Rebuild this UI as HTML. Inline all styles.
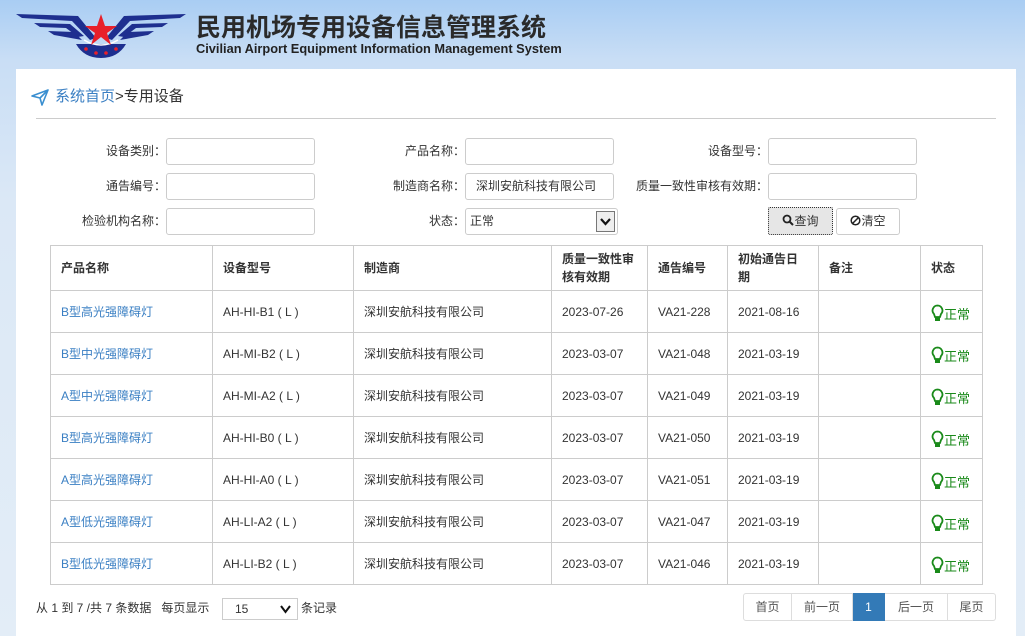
<!DOCTYPE html>
<html><head><meta charset="utf-8"><style>
*{margin:0;padding:0;box-sizing:border-box}
body{width:1025px;height:636px;overflow:hidden;font-family:"Liberation Sans","Noto Sans CJK SC",sans-serif;font-size:12px;color:#333;background:linear-gradient(180deg,#a9cdf3 0%,#c9def5 60px,#dbe8f6 200px,#e3edf7 100%);position:relative}
.a{position:absolute}
.panel{left:16px;top:69px;width:1000px;height:567px;background:#fff}
.lbl{position:absolute;text-align:right;font-size:12px;color:#333;line-height:26px}
.inp{position:absolute;height:27px;width:149px;border:1px solid #ccc;border-radius:3px;background:#fff;font-size:12px;line-height:25px;padding-left:10px}
table{position:absolute;left:50px;top:245px;border-collapse:collapse;font-size:12px}
td,th{border:1px solid #ccc;text-align:left;padding:0 10px;height:42px;vertical-align:middle}
th{font-weight:bold;height:45px;line-height:18px;font-size:12px}
td.n{color:#3a7fc3}
.ok{color:#1a8a1a;font-size:13px;padding-top:4px}
.ok svg{vertical-align:-3px}
.pg{position:absolute;top:593px;height:28px;border:1px solid #ddd;border-left:none;line-height:26px;text-align:center;color:#555;font-size:12px}
</style></head><body>
<svg class="a" style="left:0;top:0" width="200" height="65" viewBox="0 0 200 65">
<g fill="#1e2f8f">
<path d="M16 14 L78 16 L96 38 L90 40 L72 21 L22 18 Z"/>
<path d="M186 14 L124 16 L106 38 L112 40 L130 21 L180 18 Z"/>
<path d="M34 23 L70 24 L84 36 L78 37 L66 28 L40 27 Z"/>
<path d="M168 23 L132 24 L118 36 L124 37 L136 28 L162 27 Z"/>
<path d="M48 31 L74 32 L82 40 L54 35 Z"/>
<path d="M154 31 L128 32 L120 40 L148 35 Z"/>
<path d="M76 44 L126 44 Q118 58 101 58 Q84 58 76 44 Z"/>
</g>
<path d="M84 40 Q101 50 118 40" stroke="#fff" stroke-width="1.5" fill="none"/>
<polygon points="101,14 105,26 117,26 107,33 111,45 101,37 91,45 95,33 85,26 97,26" fill="#e8202a"/>
<g fill="#e8202a"><circle cx="86" cy="49" r="1.8"/><circle cx="96" cy="53" r="1.8"/><circle cx="106" cy="53" r="1.8"/><circle cx="116" cy="49" r="1.8"/></g>
</svg>
<div class="a" style="left:196px;top:12px;font-size:25px;font-weight:bold;color:#2a2a2a;line-height:32px">民用机场专用设备信息管理系统</div>
<div class="a" style="left:196px;top:41px;font-size:12.8px;font-weight:bold;color:#222;line-height:16px">Civilian Airport Equipment Information Management System</div>
<div class="a panel"></div>
<svg class="a" style="left:30px;top:88px" width="20" height="18" viewBox="0 0 20 18"><path d="M2 8 L18 2 L12 17 L10 10 Z M10 10 L18 2" fill="none" stroke="#3a8fd0" stroke-width="1.6" stroke-linejoin="round"/></svg>
<div class="a" style="left:55px;top:87px;font-size:15px;line-height:20px"><span style="color:#3a7fc3">系统首页</span>&gt;专用设备</div>
<div class="a" style="left:36px;top:118px;width:960px;height:1px;background:#ccc"></div>

<div class="lbl" style="left:40px;top:138px;width:126px">设备类别：</div><div class="inp" style="left:166px;top:138px"></div>
<div class="lbl" style="left:340px;top:138px;width:125px">产品名称：</div><div class="inp" style="left:465px;top:138px"></div>
<div class="lbl" style="left:620px;top:138px;width:148px">设备型号：</div><div class="inp" style="left:768px;top:138px"></div>
<div class="lbl" style="left:40px;top:173px;width:126px">通告编号：</div><div class="inp" style="left:166px;top:173px"></div>
<div class="lbl" style="left:340px;top:173px;width:125px">制造商名称：</div><div class="inp" style="left:465px;top:173px">深圳安航科技有限公司</div>
<div class="lbl" style="left:600px;top:173px;width:168px">质量一致性审核有效期：</div><div class="inp" style="left:768px;top:173px"></div>
<div class="lbl" style="left:40px;top:208px;width:126px">检验机构名称：</div><div class="inp" style="left:166px;top:208px"></div>
<div class="lbl" style="left:340px;top:208px;width:125px">状态：</div><div class="inp" style="left:465px;top:208px;width:153px;padding-left:4px">正常<span style="position:absolute;right:2px;top:2px;width:19px;height:21px;border:1px solid #777;background:#eee"><svg width="17" height="19" viewBox="0 0 17 19"><path d="M4 7 L8.5 12 L13 7" stroke="#111" stroke-width="2.2" fill="none"/></svg></span></div>
<div class="a" style="left:768px;top:207px;width:65px;height:28px;border:1px dotted #333;background:#e6e6e6;border-radius:2px;text-align:center;line-height:26px;font-size:12px"><svg width="12" height="12" viewBox="0 0 12 12" style="vertical-align:-1px"><circle cx="5" cy="5" r="3.5" stroke="#222" stroke-width="1.8" fill="none"/><path d="M7.5 7.5 L11 11" stroke="#222" stroke-width="2"/></svg>查询</div>
<div class="a" style="left:836px;top:208px;width:64px;height:27px;border:1px solid #ccc;background:#fff;border-radius:3px;text-align:center;line-height:25px;font-size:12px"><svg width="11" height="11" viewBox="0 0 11 11" style="vertical-align:-1px"><circle cx="5.5" cy="5.5" r="4.3" stroke="#222" stroke-width="1.5" fill="none"/><path d="M2.5 8.5 L8.5 2.5" stroke="#222" stroke-width="1.5"/></svg>清空</div>

<table>
<tr><th style="width:162px">产品名称</th><th style="width:141px">设备型号</th><th style="width:198px">制造商</th><th style="width:96px">质量一致性审<br>核有效期</th><th style="width:80px">通告编号</th><th style="width:91px">初始通告日<br>期</th><th style="width:102px">备注</th><th style="width:62px">状态</th></tr>
<tr><td class="n">B型高光强障碍灯</td><td>AH-HI-B1 ( L )</td><td>深圳安航科技有限公司</td><td>2023-07-26</td><td>VA21-228</td><td>2021-08-16</td><td></td><td class="ok"><svg width="13" height="18" viewBox="0 0 13 18"><path d="M6.5 1.5 A5 5 0 0 1 10 10 L9 13 L4 13 L3 10 A5 5 0 0 1 6.5 1.5 Z" fill="#fff" stroke="#1a8a1a" stroke-width="1.8"/><rect x="4" y="13" width="5" height="4" fill="#1a8a1a"/></svg>正常</td></tr>
<tr><td class="n">B型中光强障碍灯</td><td>AH-MI-B2 ( L )</td><td>深圳安航科技有限公司</td><td>2023-03-07</td><td>VA21-048</td><td>2021-03-19</td><td></td><td class="ok"><svg width="13" height="18" viewBox="0 0 13 18"><path d="M6.5 1.5 A5 5 0 0 1 10 10 L9 13 L4 13 L3 10 A5 5 0 0 1 6.5 1.5 Z" fill="#fff" stroke="#1a8a1a" stroke-width="1.8"/><rect x="4" y="13" width="5" height="4" fill="#1a8a1a"/></svg>正常</td></tr>
<tr><td class="n">A型中光强障碍灯</td><td>AH-MI-A2 ( L )</td><td>深圳安航科技有限公司</td><td>2023-03-07</td><td>VA21-049</td><td>2021-03-19</td><td></td><td class="ok"><svg width="13" height="18" viewBox="0 0 13 18"><path d="M6.5 1.5 A5 5 0 0 1 10 10 L9 13 L4 13 L3 10 A5 5 0 0 1 6.5 1.5 Z" fill="#fff" stroke="#1a8a1a" stroke-width="1.8"/><rect x="4" y="13" width="5" height="4" fill="#1a8a1a"/></svg>正常</td></tr>
<tr><td class="n">B型高光强障碍灯</td><td>AH-HI-B0 ( L )</td><td>深圳安航科技有限公司</td><td>2023-03-07</td><td>VA21-050</td><td>2021-03-19</td><td></td><td class="ok"><svg width="13" height="18" viewBox="0 0 13 18"><path d="M6.5 1.5 A5 5 0 0 1 10 10 L9 13 L4 13 L3 10 A5 5 0 0 1 6.5 1.5 Z" fill="#fff" stroke="#1a8a1a" stroke-width="1.8"/><rect x="4" y="13" width="5" height="4" fill="#1a8a1a"/></svg>正常</td></tr>
<tr><td class="n">A型高光强障碍灯</td><td>AH-HI-A0 ( L )</td><td>深圳安航科技有限公司</td><td>2023-03-07</td><td>VA21-051</td><td>2021-03-19</td><td></td><td class="ok"><svg width="13" height="18" viewBox="0 0 13 18"><path d="M6.5 1.5 A5 5 0 0 1 10 10 L9 13 L4 13 L3 10 A5 5 0 0 1 6.5 1.5 Z" fill="#fff" stroke="#1a8a1a" stroke-width="1.8"/><rect x="4" y="13" width="5" height="4" fill="#1a8a1a"/></svg>正常</td></tr>
<tr><td class="n">A型低光强障碍灯</td><td>AH-LI-A2 ( L )</td><td>深圳安航科技有限公司</td><td>2023-03-07</td><td>VA21-047</td><td>2021-03-19</td><td></td><td class="ok"><svg width="13" height="18" viewBox="0 0 13 18"><path d="M6.5 1.5 A5 5 0 0 1 10 10 L9 13 L4 13 L3 10 A5 5 0 0 1 6.5 1.5 Z" fill="#fff" stroke="#1a8a1a" stroke-width="1.8"/><rect x="4" y="13" width="5" height="4" fill="#1a8a1a"/></svg>正常</td></tr>
<tr><td class="n">B型低光强障碍灯</td><td>AH-LI-B2 ( L )</td><td>深圳安航科技有限公司</td><td>2023-03-07</td><td>VA21-046</td><td>2021-03-19</td><td></td><td class="ok"><svg width="13" height="18" viewBox="0 0 13 18"><path d="M6.5 1.5 A5 5 0 0 1 10 10 L9 13 L4 13 L3 10 A5 5 0 0 1 6.5 1.5 Z" fill="#fff" stroke="#1a8a1a" stroke-width="1.8"/><rect x="4" y="13" width="5" height="4" fill="#1a8a1a"/></svg>正常</td></tr>
</table>

<div class="a" style="left:36px;top:600px;line-height:16px">从 1 到 7 /共 7 条数据&nbsp;&nbsp;&nbsp;每页显示</div>
<div class="a" style="left:222px;top:598px;width:76px;height:22px;border:1px solid #ccc;line-height:20px;padding-left:12px">15<svg style="position:absolute;right:6px;top:6px" width="11" height="9" viewBox="0 0 11 9"><path d="M1 1 L5.5 7 L10 1" stroke="#111" stroke-width="2" fill="none"/></svg></div>
<div class="a" style="left:301px;top:600px;line-height:16px">条记录</div>
<div class="pg" style="left:743px;width:49px;border-left:1px solid #ddd;border-radius:3px 0 0 3px">首页</div>
<div class="pg" style="left:792px;width:61px">前一页</div>
<div class="pg" style="left:853px;width:32px;background:#337ab7;border-color:#337ab7;color:#fff">1</div>
<div class="pg" style="left:885px;width:63px">后一页</div>
<div class="pg" style="left:948px;width:48px;border-radius:0 3px 3px 0">尾页</div>
</body></html>
